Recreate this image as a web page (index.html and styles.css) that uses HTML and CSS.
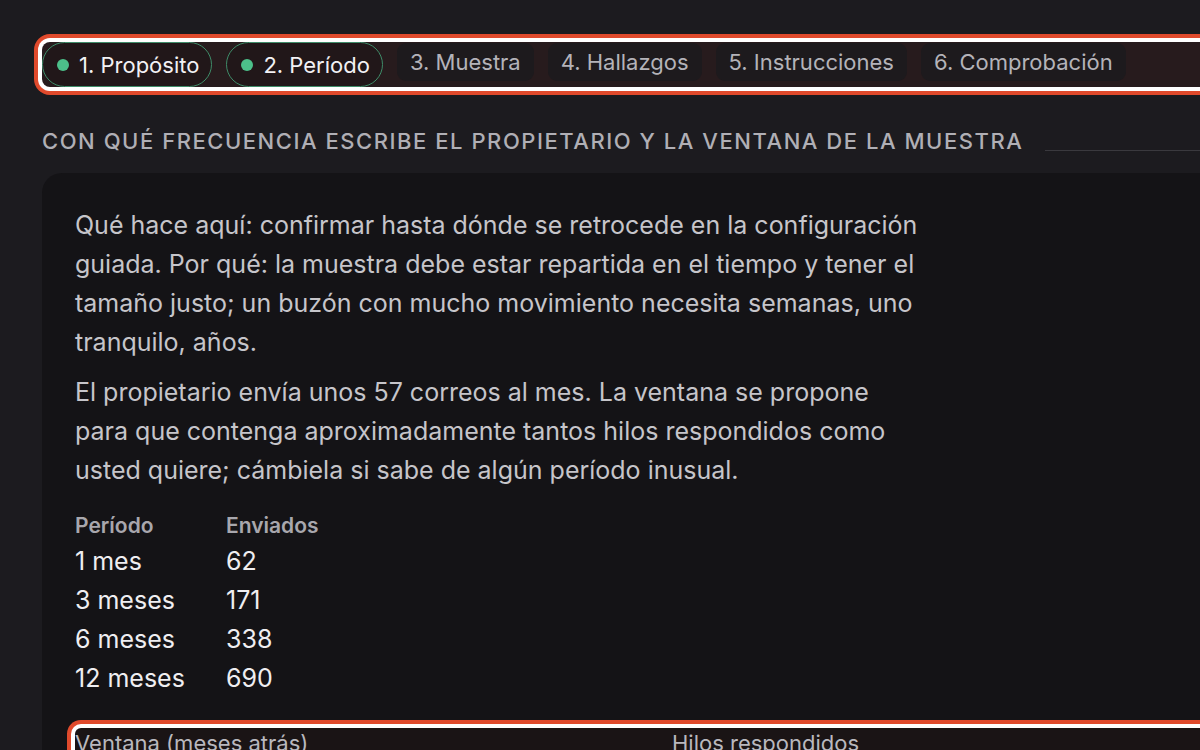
FILE: index.html
```html
<!DOCTYPE html>
<html lang="es">
<head>
<meta charset="utf-8">
<title>Período</title>
<link rel="stylesheet" href="styles.css">
</head>
<body>
<main class="page">
  <nav class="steps focus">
    <span class="step done"><span class="dot"></span>1. Propósito</span>
    <span class="step done"><span class="dot"></span>2. Período</span>
    <span class="step">3. Muestra</span>
    <span class="step">4. Hallazgos</span>
    <span class="step">5. Instrucciones</span>
    <span class="step">6. Comprobación</span>
  </nav>

  <h2 class="section-title"><span>Con qué frecuencia escribe el propietario y la ventana de la muestra</span><span class="rule"></span></h2>

  <section class="card">
    <p class="lead">Qué hace aquí: confirmar hasta dónde se retrocede en la configuración guiada. Por qué: la muestra debe estar repartida en el tiempo y tener el tamaño justo; un buzón con mucho movimiento necesita semanas, uno tranquilo, años.</p>
    <p class="lead">El propietario envía unos 57 correos al mes. La ventana se propone para que contenga aproximadamente tantos hilos respondidos como usted quiere; cámbiela si sabe de algún período inusual.</p>

    <table class="stats">
      <thead>
        <tr><th>Período</th><th>Enviados</th></tr>
      </thead>
      <tbody>
        <tr><td>1 mes</td><td>62</td></tr>
        <tr><td>3 meses</td><td>171</td></tr>
        <tr><td>6 meses</td><td>338</td></tr>
        <tr><td>12 meses</td><td>690</td></tr>
      </tbody>
    </table>

    <div class="controls focus">
      <label class="ctl">Ventana (meses atrás)</label>
      <label class="ctl">Hilos respondidos</label>
    </div>
  </section>
</main>
</body>
</html>
```

FILE: styles.css
```css
* { box-sizing: border-box; }

html, body {
  margin: 0;
  padding: 0;
  background: #1c1b1f;
  overflow: hidden;
  height: 750px;
}

body {
  font-family: Inter, "Noto Sans", sans-serif;
  color: #c9c8cd;
}

.page {
  width: 1320px;
  padding: 42px 0 0 42px;
}

.focus {
  box-shadow: 0 0 0 4px #ffffff, 0 0 0 8px #e04a2c;
}

.steps {
  display: flex;
  align-items: flex-start;
  gap: 14px;
  height: 45px;
  background: #271b1d;
  border-radius: 8px;
}

.step {
  display: flex;
  align-items: center;
  height: 38px;
  margin-top: 1px;
  padding: 0 13px;
  border-radius: 9px;
  background: #1d1a1d;
  color: #b4b3b9;
  font-size: 22px;
  white-space: nowrap;
}

.step.done {
  height: 45px;
  margin-top: 0;
  border-radius: 23px;
  border: 1.5px solid #3f8c69;
  background: #211719;
  color: #f2f1f4;
  padding: 0 12px 0 14px;
}

.dot {
  width: 12px;
  height: 12px;
  border-radius: 50%;
  background: #4cc08a;
  margin-right: 10px;
}

.section-title {
  display: flex;
  align-items: flex-end;
  gap: 22px;
  margin: 40px 0 0;
  font-size: 22px;
  font-weight: 500;
  letter-spacing: 0.07em;
  text-transform: uppercase;
  color: #b0afb5;
  line-height: 28px;
}

.section-title .rule {
  flex: 1;
  height: 1px;
  background: #3a393e;
  margin-bottom: 4px;
}

.card {
  margin-top: 18px;
  background: #141316;
  border-radius: 20px;
  padding: 33px 33px 40px;
}

.lead {
  max-width: 848px;
  margin: 0 0 11px;
  font-size: 25px;
  line-height: 39px;
  color: #c6c5ca;
}

.stats {
  border-collapse: collapse;
  margin-top: 20px;
}

.stats th {
  text-align: left;
  font-size: 21px;
  font-weight: 600;
  color: #a8a7ad;
  padding: 0 70px 0 0;
  line-height: 32px;
}

.stats td {
  font-size: 25px;
  color: #efeef1;
  padding: 0;
  line-height: 39px;
}

.stats td:first-child { width: 151px; }

.controls {
  display: grid;
  grid-template-columns: 597px 1fr;
  margin-top: 30px;
  border-radius: 6px 0 0 0;
  background: #1a1415;
}

.ctl {
  font-size: 22px;
  color: #b9b8be;
  line-height: 30px;
}
```
